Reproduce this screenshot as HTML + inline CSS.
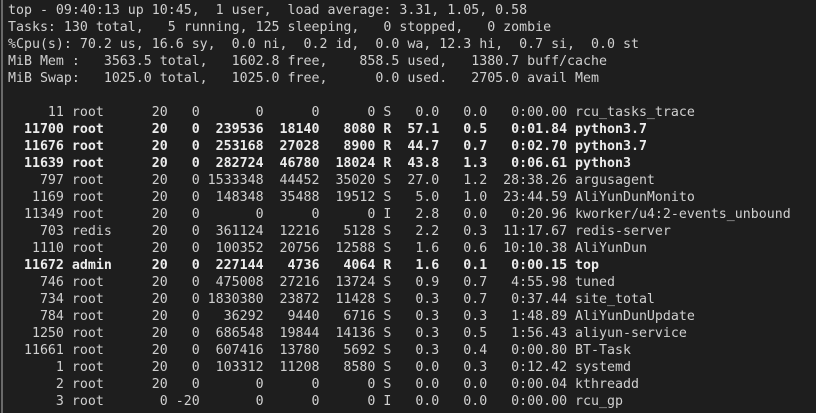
<!DOCTYPE html>
<html><head><meta charset="utf-8"><style>
html,body{margin:0;padding:0;background:#1e1e1e;width:816px;height:413px;overflow:hidden}
.bar{position:absolute;left:1px;top:0;width:2px;height:413px;background:#6a6a6a}
pre{position:absolute;left:8px;top:2px;margin:0;font-family:"DejaVu Sans Mono","Liberation Mono",monospace;font-size:13.28px;line-height:17px;color:#d0d0d0;white-space:pre}
b{color:#ececec}
</style></head><body><div class="bar"></div><pre>top - 09:40:13 up 10:45,  1 user,  load average: 3.31, 1.05, 0.58
Tasks: 130 total,   5 running, 125 sleeping,   0 stopped,   0 zombie
%Cpu(s): 70.2 us, 16.6 sy,  0.0 ni,  0.2 id,  0.0 wa, 12.3 hi,  0.7 si,  0.0 st
MiB Mem :   3563.5 total,   1602.8 free,    858.5 used,   1380.7 buff/cache
MiB Swap:   1025.0 total,   1025.0 free,      0.0 used.   2705.0 avail Mem

     11 root      20   0       0      0      0 S   0.0   0.0   0:00.00 rcu_tasks_trace
<b>  11700 root      20   0  239536  18140   8080 R  57.1   0.5   0:01.84 python3.7</b>
<b>  11676 root      20   0  253168  27028   8900 R  44.7   0.7   0:02.70 python3.7</b>
<b>  11639 root      20   0  282724  46780  18024 R  43.8   1.3   0:06.61 python3</b>
    797 root      20   0 1533348  44452  35020 S  27.0   1.2  28:38.26 argusagent
   1169 root      20   0  148348  35488  19512 S   5.0   1.0  23:44.59 AliYunDunMonito
  11349 root      20   0       0      0      0 I   2.8   0.0   0:20.96 kworker/u4:2-events_unbound
    703 redis     20   0  361124  12216   5128 S   2.2   0.3  11:17.67 redis-server
   1110 root      20   0  100352  20756  12588 S   1.6   0.6  10:10.38 AliYunDun
<b>  11672 admin     20   0  227144   4736   4064 R   1.6   0.1   0:00.15 top</b>
    746 root      20   0  475008  27216  13724 S   0.9   0.7   4:55.98 tuned
    734 root      20   0 1830380  23872  11428 S   0.3   0.7   0:37.44 site_total
    784 root      20   0   36292   9440   6716 S   0.3   0.3   1:48.89 AliYunDunUpdate
   1250 root      20   0  686548  19844  14136 S   0.3   0.5   1:56.43 aliyun-service
  11661 root      20   0  607416  13780   5692 S   0.3   0.4   0:00.80 BT-Task
      1 root      20   0  103312  11208   8580 S   0.0   0.3   0:12.42 systemd
      2 root      20   0       0      0      0 S   0.0   0.0   0:00.04 kthreadd
      3 root       0 -20       0      0      0 I   0.0   0.0   0:00.00 rcu_gp</pre></body></html>
